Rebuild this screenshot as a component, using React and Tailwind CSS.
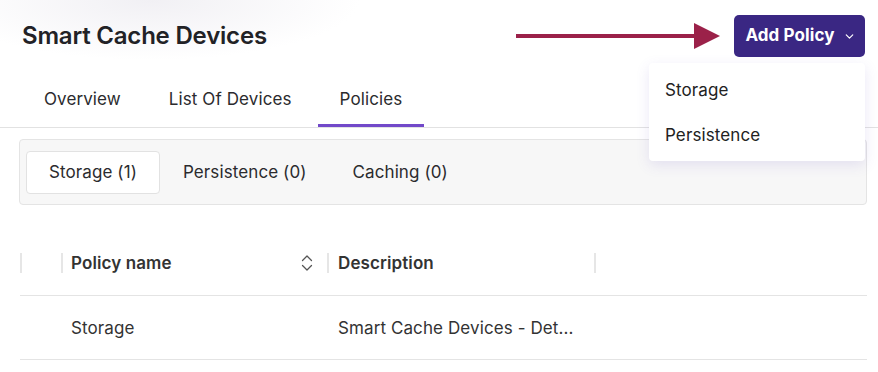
import { ChevronDown } from 'lucide-react';

const tabs = ['Overview', 'List Of Devices', 'Policies'];
const segments = ['Storage (1)', 'Persistence (0)', 'Caching (0)'];
const menuItems = ['Storage', 'Persistence'];

function SortIcon() {
	return (
		<svg width="14" height="20" viewBox="0 0 14 20" fill="none" stroke="#555" strokeWidth="1.3" strokeLinecap="round" strokeLinejoin="round">
			<path d="M2.5 7.5 7 3l4.5 4.5" />
			<path d="M2.5 12.5 7 17l4.5-4.5" />
		</svg>
	);
}

function Sep() {
	return <span className="w-[2px] h-[20px] bg-[#e6e6e6] flex-shrink-0" />;
}

export default function App() {
	return (
		<div className="relative w-[878px] h-[372px] bg-white overflow-hidden font-['Inter',sans-serif] text-[#2b2b2e] text-[17px] tracking-[0.1px]">
			{/* faint glow top-left */}
			<div className="absolute -left-[60px] -top-[60px] w-[420px] h-[120px] rounded-full bg-[radial-gradient(closest-side,#f1f0f4,#ffffff00)] pointer-events-none" />

			{/* ── Header ── */}
			<div className="relative flex items-center justify-between pl-[22px] pr-[13px] pt-[15px] h-[57px]">
				<h1 className="text-[24px] font-semibold tracking-[-0.2px] text-[#222226] leading-none">Smart Cache Devices</h1>
				<div className="flex items-center">
					<svg width="206" height="28" viewBox="0 0 206 28" className="mr-[12px]">
						<rect x="0" y="12" width="182" height="4" fill="#9b2149" />
						<polygon points="178,1 204,14 178,27" fill="#9b2149" />
					</svg>
					<button className="h-[42px] w-[131px] rounded-[5px] bg-[#3a2783] text-white text-[17px] font-bold flex items-center justify-center gap-[8px] pl-[2px]">
						Add Policy
						<ChevronDown size={13} strokeWidth={2.2} />
					</button>
				</div>
			</div>

			{/* ── Tabs ── */}
			<div className="relative flex gap-[4px] pl-[22px] border-b border-[#e2e2e2] h-[71px] items-end">
				{tabs.map(t => (
					<div key={t}
						className={`px-[22px] h-[54px] flex items-center ${t === 'Policies' ? 'border-b-[3px] border-[#7249c9] pt-[3px]' : ''}`}>
						{t}
					</div>
				))}
			</div>

			{/* ── Segments ── */}
			<div className="mx-[19px] mt-[11px] w-[848px] h-[66px] rounded-[4px] border border-[#e4e4e4] bg-[#f7f7f7] flex items-center px-[6px]">
				{segments.map((s, i) => (
					<div key={s}
						className={`h-[43px] px-[22px] pt-[2px] flex items-center rounded-[4px] border ${i === 0 ? 'bg-white border-[#e2e2e2]' : 'border-transparent'}`}>
						{s}
					</div>
				))}
			</div>

			{/* ── Table ── */}
			<div className="ml-[20px] w-[847px] mt-[25px] text-[#333]">
				<div className="flex items-center h-[66px] border-b border-[#e4e4e4]">
					<div className="w-[41px] flex items-center"><Sep /></div>
					<div className="w-[266px] flex items-center">
						<Sep />
						<span className="pl-[8px] pt-[2px] font-semibold flex-1">Policy name</span>
						<span className="mr-[13px]"><SortIcon /></span>
					</div>
					<div className="w-[267px] flex items-center">
						<Sep />
						<span className="pl-[9px] pt-[2px] font-semibold">Description</span>
					</div>
					<div className="flex-1 flex items-center"><Sep /></div>
				</div>
				<div className="flex items-center h-[64px] pt-[2px] border-b border-[#e4e4e4]">
					<div className="w-[41px]" />
					<div className="w-[266px] pl-[10px]">Storage</div>
					<div className="w-[267px] pl-[11px] truncate">Smart Cache Devices - Det...</div>
				</div>
			</div>

			{/* ── Dropdown menu ── */}
			<div className="absolute left-[649px] top-[63px] w-[216px] h-[98px] bg-white rounded-[4px] shadow-[0_4px_14px_rgba(90,70,190,0.13)] flex flex-col justify-center pt-[3px]">
				{menuItems.map(m => (
					<div key={m} className="px-[16px] h-[45px] flex items-center text-[#222]">{m}</div>
				))}
			</div>
		</div>
	);
}
